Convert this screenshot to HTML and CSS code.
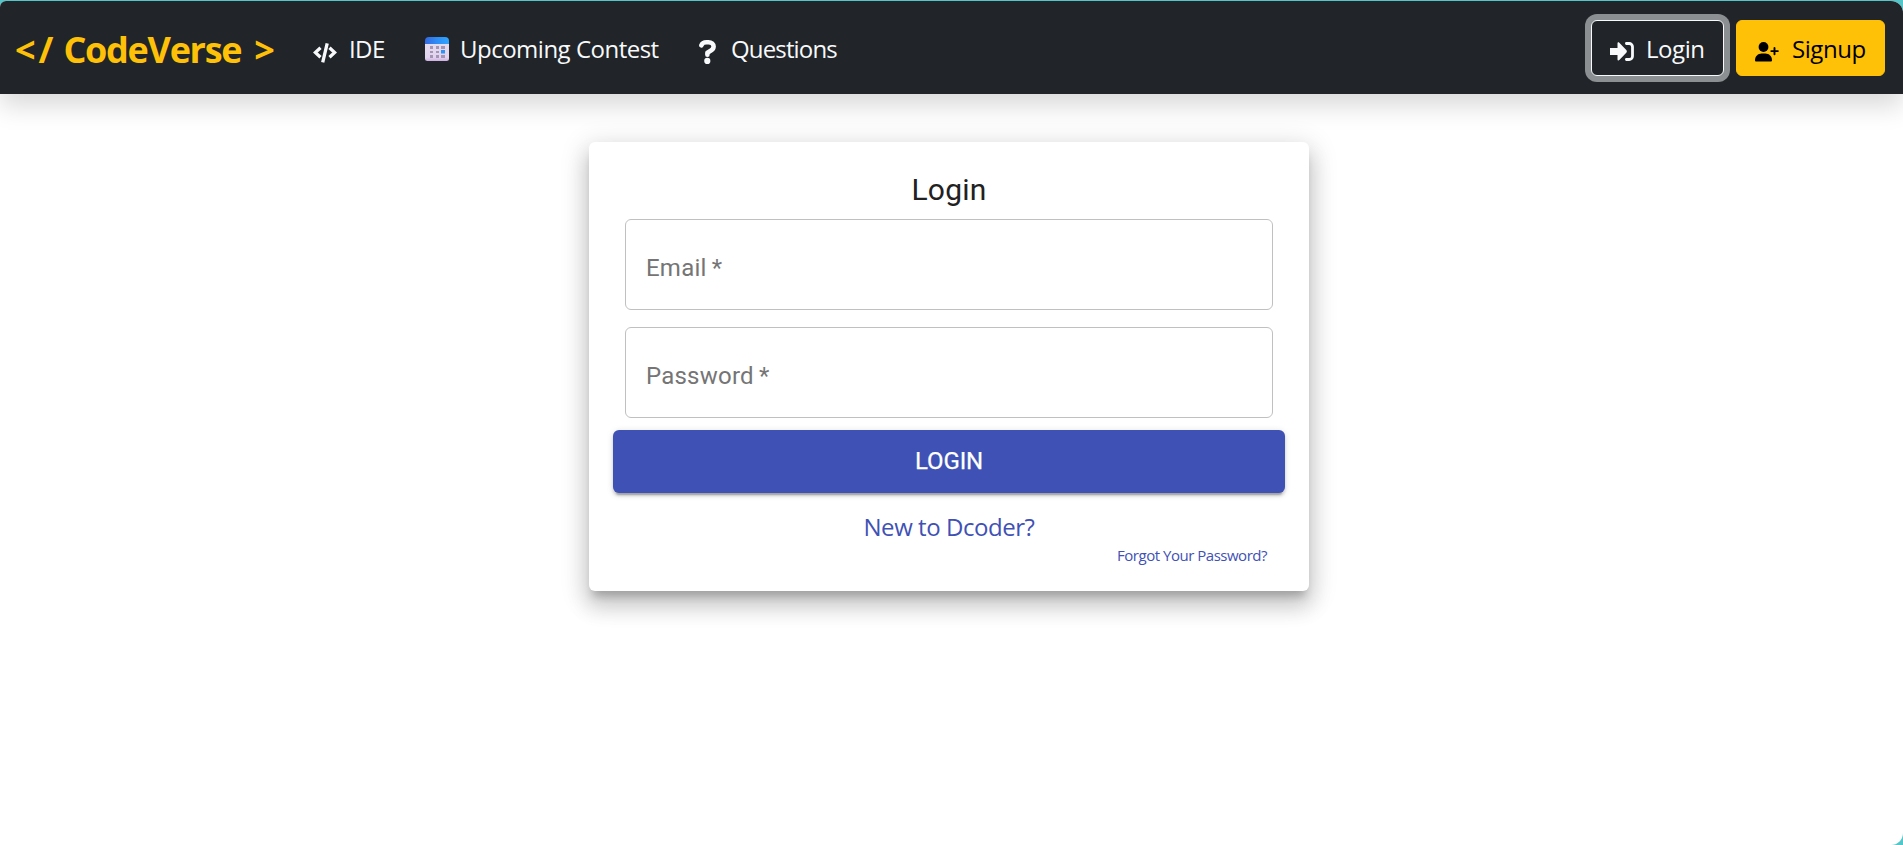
FILE: index.html
```html
<!DOCTYPE html>
<html lang="en">
<head>
<meta charset="utf-8">
<title>CodeVerse</title>
<link rel="stylesheet" href="styles.css">
</head>
<body>
<div class="window">
  <nav class="navbar">
    <a class="brand"><span class="open">&lt;/</span><span class="name">CodeVerse</span><span>&gt;</span></a>
    <a class="link link-ide">
      <svg class="icon" viewBox="0 0 24 20"><path fill="none" stroke="currentColor" stroke-width="3.300" d="M7.500 4.700 2.300 9.500l5.200 4.800M16.500 4.700l5.200 4.800-5.200 4.800M14.200.4 9.700 19.300"/></svg>
      <span class="t-ide">IDE</span>
    </a>
    <a class="link link-contest">
      <svg class="calendar" viewBox="0 0 24 24">
        <defs>
          <linearGradient id="head" x1="0" x2="1"><stop offset="0" stop-color="#3568e0"/><stop offset=".5" stop-color="#2f8df6"/><stop offset="1" stop-color="#2fa5ff"/></linearGradient>
          <linearGradient id="page" x1="0" x2="0" y1="0" y2="1"><stop offset="0" stop-color="#e4dcee"/><stop offset=".8" stop-color="#e2d3ef"/><stop offset="1" stop-color="#cdb0e2"/></linearGradient>
        </defs>
        <path fill="url(#page)" d="M0 6h24v15.500a2.500 2.500 0 0 1-2.500 2.500h-19A2.500 2.500 0 0 1 0 21.500z"/>
        <path fill="url(#head)" d="M4 0h16a4 4 0 0 1 4 4v3H0V4a4 4 0 0 1 4-4z"/>
        <g fill="#a396b4"><path d="M5 9h3v3H5zM11 9h3v3h-3zM16 9h4v3h-4zM5 14h3v2H5zM11 14h3v2h-3zM5 18h3v3H5zM11 18h3v3h-3zM16 18h4v3h-4z"/></g>
        <path fill="#2f93f5" d="M16 13h4v3.500h-4z"/>
      </svg>
      <span class="t-contest">Upcoming Contest</span>
    </a>
    <a class="link link-questions">
      <svg class="question" viewBox="0 0 17 24"><path fill="none" stroke="currentColor" stroke-width="4.600" stroke-linecap="round" stroke-linejoin="round" d="M2.400 5.300C3.200 3 5.300 2.300 7.500 2.300h2c3 0 5.100 2 5.100 4.300 0 2-1 3.100-2.600 4L8.400 12.700v2"/><circle cx="8.300" cy="20.900" r="3.100" fill="currentColor"/></svg>
      <span class="t-questions">Questions</span>
    </a>
    <div class="actions">
      <button class="btn btn-login">
        <svg class="icon-login" viewBox="0 0 24 19"><path fill="currentColor" d="M0 6h7.500V1.600c0-1.300 1-1.600 1.800-.8l7 7.300c.8.800.8 1.800 0 2.600l-7 7.300c-.8.800-1.800.5-1.800-.8V13H0z"/><path fill="none" stroke="currentColor" stroke-width="2.800" stroke-linecap="round" d="M16.400 1.500h2.800a3.300 3.300 0 0 1 3.300 3.300v9.400a3.300 3.300 0 0 1-3.300 3.300h-2.800"/></svg>
        <span class="t-login">Login</span>
      </button>
      <button class="btn btn-signup">
        <svg class="icon-signup" viewBox="0 0 24 20"><circle cx="8.500" cy="5" r="4.900" fill="currentColor"/><path fill="currentColor" d="M0 18.200c0-3.900 3-6.700 6.700-6.700h3.600c3.700 0 6.700 2.800 6.700 6.700 0 .8-.5 1.300-1.300 1.300H1.300C.5 19.500 0 19 0 18.200z"/><path stroke="currentColor" stroke-width="1.900" stroke-linecap="round" d="M19.500 5.900v6.400M16.300 9.100h6.600"/></svg>
        <span class="t-signup">Signup</span>
      </button>
    </div>
  </nav>
  <main class="main">
    <form class="card">
      <h1 class="title">Login</h1>
      <label class="field"><span class="t-email">Email&thinsp;*</span></label>
      <label class="field"><span class="t-password">Password&thinsp;*</span></label>
      <button class="submit" type="button">LOGIN</button>
      <a class="register">New to Dcoder?</a>
      <a class="forgot">Forgot Your Password?</a>
    </form>
  </main>
</div>
</body>
</html>
```
FILE: styles.css
```css
* { box-sizing: border-box; }
body {
  margin: 0;
  height: 845px;
  overflow: hidden;
  padding-top: 1px;
  background: #54c5c8;
  font-family: "Open Sans", "Noto Sans", sans-serif;
  font-size: 24px;
  line-height: 36px;
}
.window {
  height: 844px;
  overflow: hidden;
  background: #fff;
  border-radius: 6px 12px 12px 0;
}
.navbar {
  display: flex;
  align-items: center;
  height: 93px;
  padding: 0 18px 0 15px;
  background: #212529;
  color: #f8f9fa;
  box-shadow: 0 12px 24px rgba(0, 0, 0, .15);
  white-space: nowrap;
}
.brand {
  display: flex;
  width: 298px;
  padding: 5px 0 0 0;
  color: #ffc107;
  font-size: 36px;
  font-weight: 700;
  line-height: 54px;
  letter-spacing: -1.3px;
}
.open { margin-right: 7px; letter-spacing: 3px; }
.name { margin-right: 13px; }
.link { display: flex; align-items: center; }
.link span { padding-top: 3px; }
.link-ide { width: 112px; }
.link-contest { width: 274px; }
.icon { width: 24px; height: 20px; margin: 10px 12px 0 0; }
.calendar { width: 24px; height: 24px; margin: 3px 11px 0 0; }
.question { width: 17px; height: 24px; margin: 8px 15px 0 0; }
.t-ide { letter-spacing: -.6px; }
.t-contest { letter-spacing: -.5px; }
.t-questions { letter-spacing: -.85px; }
.actions { display: flex; gap: 12px; margin-left: auto; }
.btn {
  display: flex;
  align-items: center;
  height: 56px;
  padding: 0 0 0 18px;
  border: 1px solid #f8f9fa;
  border-radius: 6px;
  background: #212529;
  color: #f8f9fa;
  font: inherit;
}
.btn-login { width: 133px; box-shadow: 0 0 0 6px #8c8f91; }
.btn-signup { width: 149px; border-color: #ffc107; background: #ffc107; color: #000; }
.icon-login { width: 24px; height: 19px; margin: 8px 12px 0 0; }
.icon-signup { width: 24px; height: 20px; margin: 8px 13px 0 0; }
.t-login, .t-signup { padding-top: 3px; letter-spacing: -.45px; }
.main { display: flex; justify-content: center; padding: 48px 5px 0 0; }
.card {
  display: flex;
  flex-direction: column;
  width: 720px;
  height: 449px;
  padding: 24px;
  border-radius: 6px;
  background: #fff;
  box-shadow: 0 9px 9px -4.5px rgba(0, 0, 0, .2), 0 15px 21px 1.5px rgba(0, 0, 0, .14), 0 6px 27px 4.5px rgba(0, 0, 0, .12);
}
.title {
  margin: 0 0 5px;
  color: #212121;
  font: 400 30px/48px Roboto, sans-serif;
  letter-spacing: .22px;
  text-align: center;
}
.field {
  display: flex;
  align-items: center;
  height: 91px;
  margin: 0 12px 17px;
  padding: 7px 0 0 20px;
  border: 1px solid #c0c0c0;
  border-radius: 6px;
  color: #757575;
  font: 400 24px/28px Roboto, sans-serif;
  letter-spacing: .22px;
}
.submit {
  height: 63px;
  margin: -5px 0 16px;
  padding: 0 0 2px;
  border: 0;
  border-radius: 6px;
  background: #3f51b5;
  color: #fff;
  font: 400 24px/42px Roboto, sans-serif;
  -webkit-text-stroke: .25px #fff;
  letter-spacing: -.1px;
  box-shadow: 0 4.5px 1.5px -3px rgba(0, 0, 0, .2), 0 3px 3px rgba(0, 0, 0, .14), 0 1.5px 7.5px rgba(0, 0, 0, .12);
}
.register { color: #3f51b5; text-align: center; letter-spacing: -.45px; }
.forgot {
  margin-right: 18px;
  color: #3f51b5;
  font-size: 15px;
  line-height: 20px;
  letter-spacing: -.48px;
  text-align: right;
}
```
